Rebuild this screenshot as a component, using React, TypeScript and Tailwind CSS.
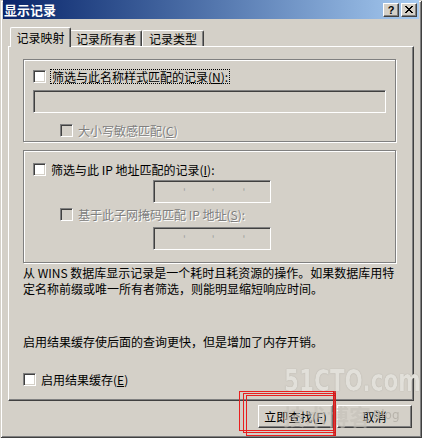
import React from "react";

const FONT = "font-['Noto_Sans_CJK_SC','Noto_Sans_CJK_JP',sans-serif]";

function Check({ disabled }: { disabled?: boolean }) {
  return (
    <span
      className={
        "block w-[13px] h-[13px] shrink-0 border-t border-l border-t-[#808080] border-l-[#808080] border-b border-r border-b-white border-r-white shadow-[inset_1px_1px_0_#404040,inset_-1px_-1px_0_#d4d0c8] " +
        (disabled ? "bg-[#d4d0c8]" : "bg-white")
      }
    />
  );
}

function Sunken({ className, children }: { className: string; children?: React.ReactNode }) {
  return (
    <div
      className={
        "bg-[#d4d0c8] border-t border-l border-t-[#808080] border-l-[#808080] border-b border-r border-b-white border-r-white shadow-[inset_1px_1px_0_#404040,inset_-1px_-1px_0_#d4d0c8] " +
        className
      }
    >
      {children}
    </div>
  );
}

function IpBox() {
  return (
    <Sunken className="w-[118px] h-[23px] flex items-center text-[#a0a0a0] text-[10px] leading-none">
      <span className="ml-[29px]">'</span>
      <span className="ml-[26px]">'</span>
      <span className="ml-[28px]">'</span>
    </Sunken>
  );
}

function Raised({ className, children }: { className: string; children?: React.ReactNode }) {
  return (
    <div
      className={
        "bg-[#d4d0c8] border-t border-l border-white border-r border-b border-r-[#404040] border-b-[#404040] shadow-[inset_-1px_-1px_0_#808080] flex items-center justify-center " +
        className
      }
    >
      {children}
    </div>
  );
}

const disabledText = "text-[#808080] [text-shadow:1px_1px_0_#ffffff]";

export default function App() {
  return (
    <div
      className={
        "relative w-[422px] h-[438px] bg-[#d4d0c8] overflow-hidden text-[12px] text-black shadow-[inset_1px_1px_0_#d4d0c8,inset_-1px_-1px_0_#404040,inset_2px_2px_0_#ffffff,inset_-2px_-2px_0_#808080] " +
        FONT
      }
    >
      {/* Title bar */}
      <div className="mx-[3px] h-[19px] flex items-center bg-gradient-to-r from-[#0a246a] to-[#a6caf0]">
        <span className="ml-[1px] text-white font-bold text-[13px] leading-[19px]">显示记录</span>
        <div className="ml-auto mr-[2px] flex gap-[2px]">
          <Raised className="w-[16px] h-[14px]">
            <span className="font-['Liberation_Sans',sans-serif] font-bold text-[11px] leading-none mt-[1px]">?</span>
          </Raised>
          <Raised className="w-[16px] h-[14px]">
            <svg width="8" height="7" viewBox="0 0 8 7" shapeRendering="crispEdges">
              <path d="M0 0h2v1h-2zM6 0h2v1h-2zM1 1h2v1h-2zM5 1h2v1h-2zM2 2h4v1h-4zM3 3h2v1h-2zM2 4h4v1h-4zM1 5h2v1h-2zM5 5h2v1h-2zM0 6h2v1h-2zM6 6h2v1h-2z" fill="#000" />
            </svg>
          </Raised>
        </div>
      </div>

      {/* Tabs + panel */}
      <div className="ml-[8px] mt-[8px] w-[406px]">
        <div className="relative z-10 flex items-end pl-[2px] h-[20px]">
          <div className="w-[61px] h-[20px] bg-[#d4d0c8] border-l border-t border-white border-r border-r-[#404040] shadow-[inset_-1px_0_0_#808080] rounded-tl-[2px] rounded-tr-[2px] flex items-start justify-center pt-[3px] leading-[14px]">
            记录映射
          </div>
          <div className="w-[71px] h-[16px] mb-[1px] border-t border-white border-r border-r-[#404040] shadow-[inset_-1px_0_0_#808080] rounded-tr-[2px] flex items-center justify-center leading-[14px]">
            记录所有者
          </div>
          <div className="w-[62px] h-[16px] mb-[1px] border-t border-l border-white border-r border-r-[#404040] shadow-[inset_-1px_0_0_#808080] rounded-tl-[2px] rounded-tr-[2px] flex items-center justify-center leading-[14px]">
            记录类型
          </div>
        </div>
        <div className="-mt-px h-[355px] border-t border-l border-white border-r border-b border-r-[#404040] border-b-[#404040] shadow-[inset_-1px_-1px_0_#808080] pl-[14px] flex flex-col">
          {/* Group 1 */}
          <div className="mt-[12px] w-[373px] h-[83px] border border-[#808080] shadow-[inset_1px_1px_0_#ffffff,1px_1px_0_#ffffff] pt-[9px] pl-[9px] flex flex-col">
            <div className="flex items-center h-[15px]">
              <Check />
              <span className="ml-[4px] border border-dotted border-black px-[1px] h-[15px] leading-[13px] whitespace-nowrap">
                筛选与此名称样式匹配的记录(<u>N</u>):
              </span>
            </div>
            <Sunken className="mt-[6px] w-[353px] h-[23px]" />
            <div className="mt-[10px] ml-[27px] flex items-center h-[15px]">
              <Check disabled />
              <span className={"ml-[5px] leading-[15px] whitespace-nowrap " + disabledText}>
                大小写敏感匹配(<u>C</u>)
              </span>
            </div>
          </div>

          {/* Group 2 */}
          <div className="mt-[8px] w-[373px] h-[113px] border border-[#808080] shadow-[inset_1px_1px_0_#ffffff,1px_1px_0_#ffffff] pt-[11px] pl-[9px] flex flex-col">
            <div className="flex items-center h-[15px]">
              <Check />
              <span className="ml-[5px] leading-[15px] whitespace-nowrap">
                筛选与此 IP 地址匹配的记录(<u>I</u>):
              </span>
            </div>
            <div className="mt-[3px] ml-[120px]">
              <IpBox />
            </div>
            <div className="mt-[4px] ml-[27px] flex items-center h-[15px]">
              <Check disabled />
              <span className={"ml-[5px] leading-[15px] whitespace-nowrap " + disabledText}>
                基于此子网掩码匹配 IP 地址(<u>S</u>):
              </span>
            </div>
            <div className="mt-[5px] ml-[120px]">
              <IpBox />
            </div>
          </div>

          <p className="mt-[2px] leading-[16px] whitespace-nowrap">
            从 WINS 数据库显示记录是一个耗时且耗资源的操作。如果数据库用特
            <br />
            定名称前缀或唯一所有者筛选，则能明显缩短响应时间。
          </p>

          <p className="mt-[37px] leading-[16px] whitespace-nowrap">启用结果缓存使后面的查询更快，但是增加了内存开销。</p>

          <div className="mt-[22px] flex items-center h-[15px]">
            <Check />
            <span className="ml-[5px] leading-[15px] whitespace-nowrap">
              启用结果缓存(<u>E</u>)
            </span>
          </div>
        </div>

        {/* Buttons */}
        <div className="mt-[4px] flex justify-end gap-[4px] pr-[2px]">
          <Raised className="w-[75px] h-[23px] leading-[14px] whitespace-nowrap">
            立即查找(<u>F</u>)
          </Raised>
          <Raised className="w-[75px] h-[23px] leading-[14px]">取消</Raised>
        </div>
      </div>

      {/* Watermark */}
      <div className="absolute left-[284px] top-[365px] pointer-events-none select-none origin-left scale-x-[0.8] font-['DejaVu_Sans_Condensed',sans-serif] font-bold text-[30px] leading-[32px] whitespace-nowrap text-[#e2e0da] [text-shadow:0_0_1px_#9c988f]">
        51CTO.com
      </div>
      <div className="absolute left-[283px] top-[401px] pointer-events-none select-none flex items-center gap-[2px] whitespace-nowrap text-[#c4c0b8]">
        <span className="text-[22px] leading-[28px] font-bold opacity-60">技术博客</span>
        <span className="font-['DejaVu_Sans',sans-serif] text-[12px] leading-[14px] text-[#b0aca4] opacity-80">Blog</span>
      </div>

      {/* Red annotation rectangles */}
      <div className="absolute left-[239px] top-[391px] w-[95px] h-[40px] border border-[#e82020] pointer-events-none" />
      <div className="absolute left-[243px] top-[393px] w-[93px] h-[40px] border border-[#e82020] pointer-events-none" />
      <div className="absolute left-[246px] top-[395px] w-[90px] h-[41px] border border-[#e82020] pointer-events-none" />
      <div className="absolute left-[333px] top-[391px] w-[3px] h-[45px] bg-[#d01818] opacity-80 pointer-events-none" />
    </div>
  );
}
